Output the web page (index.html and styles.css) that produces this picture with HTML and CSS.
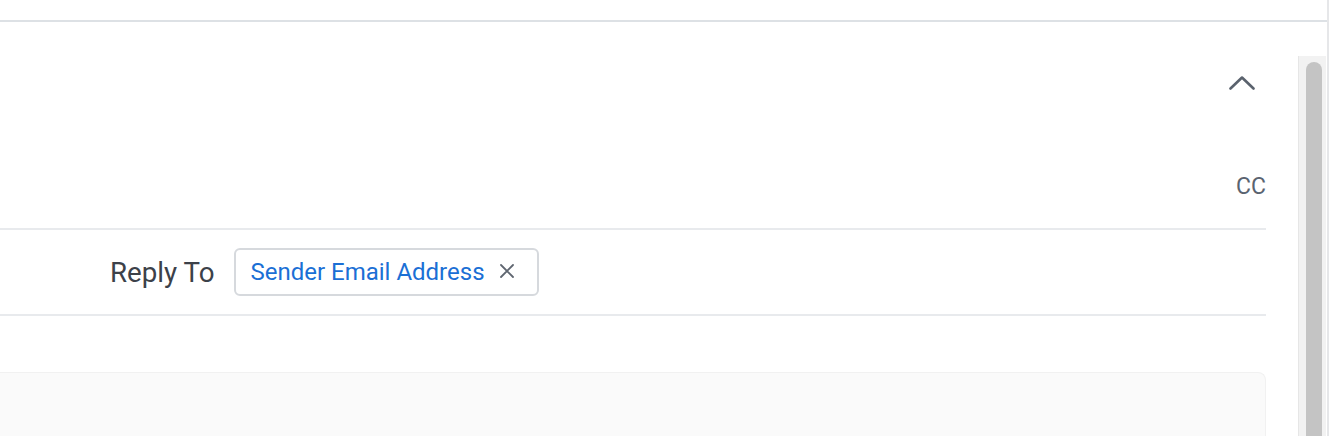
FILE: index.html
```html
<!DOCTYPE html>
<html>
<head>
<meta charset="utf-8">
<link rel="stylesheet" href="styles.css">
</head>
<body>
<div class="frame">
  <div class="topbar"></div>
  <div class="main">
    <div class="content">
      <div class="section-head">
        <svg class="chevron" width="26" height="14" viewBox="0 0 26 14"><polyline points="1.5,12.5 13,1.5 24.5,12.5" fill="none" stroke="#5a626d" stroke-width="2.6" stroke-linecap="round" stroke-linejoin="round"/></svg>
        <span class="cc">CC</span>
      </div>
      <div class="row-reply">
        <span class="label">Reply To</span>
        <div class="chip">
          <span class="chip-text">Sender Email Address</span>
          <svg class="chip-x" width="16" height="16" viewBox="0 0 16 16"><path d="M2 2 L14 14 M14 2 L2 14" stroke="#5f6670" stroke-width="1.8" stroke-linecap="round"/></svg>
        </div>
      </div>
      <div class="editor-box"></div>
    </div>
    <div class="scroll-track"><div class="scroll-thumb"></div></div>
  </div>
</div>
</body>
</html>
```
FILE: styles.css
```css
html, body {
  margin: 0;
  padding: 0;
  background: #ffffff;
  font-family: Roboto, "Liberation Sans", sans-serif;
  overflow: hidden;
}
.frame {
  width: 1327px;
  height: 436px;
  border-right: 2px solid #e6e7e9;
  overflow: hidden;
}
.topbar {
  height: 20px;
  border-bottom: 2px solid #dde1e5;
}
.main {
  display: flex;
  gap: 32px;
}
.content {
  width: 1266px;
  flex: none;
}
.section-head {
  height: 208px;
  border-bottom: 2px solid #e8eaed;
  display: flex;
  flex-direction: column;
  align-items: flex-end;
  box-sizing: border-box;
  padding-top: 54px;
}
.chevron {
  display: block;
  margin-right: 11px;
}
.cc {
  margin-top: 83px;
  font-size: 23px;
  line-height: 27px;
  color: #5a6370;
  margin-right: 0;
}
.row-reply {
  height: 84px;
  border-bottom: 2px solid #e8eaed;
  display: flex;
  align-items: center;
  padding-left: 110px;
  gap: 20px;
}
.label {
  font-size: 27.7px;
  color: #3c4149;
}
.chip {
  height: 48px;
  box-sizing: border-box;
  border: 2px solid #d6d9dd;
  border-radius: 6px;
  display: flex;
  align-items: center;
  padding: 0 22px 0 14px;
  gap: 14px;
}
.chip-text {
  font-size: 24px;
  color: #1b6fd5;
}
.chip-x {
  display: block;
  margin-top: -2px;
}
.editor-box {
  margin-top: 56px;
  height: 120px;
  background: #fafafa;
  border-top: 1px solid #f1f1f1;
  border-right: 1px solid #f1f1f1;
  border-top-right-radius: 8px;
}
.scroll-track {
  width: 28px;
  margin-top: 34px;
  height: 400px;
  background: #f2f2f2;
  border-left: 1px solid #e6e6e6;
  box-sizing: border-box;
  padding: 6px 4px 0 7px;
}
.scroll-thumb {
  width: 16px;
  height: 400px;
  background: #c4c4c4;
  border-radius: 8px;
}
```
